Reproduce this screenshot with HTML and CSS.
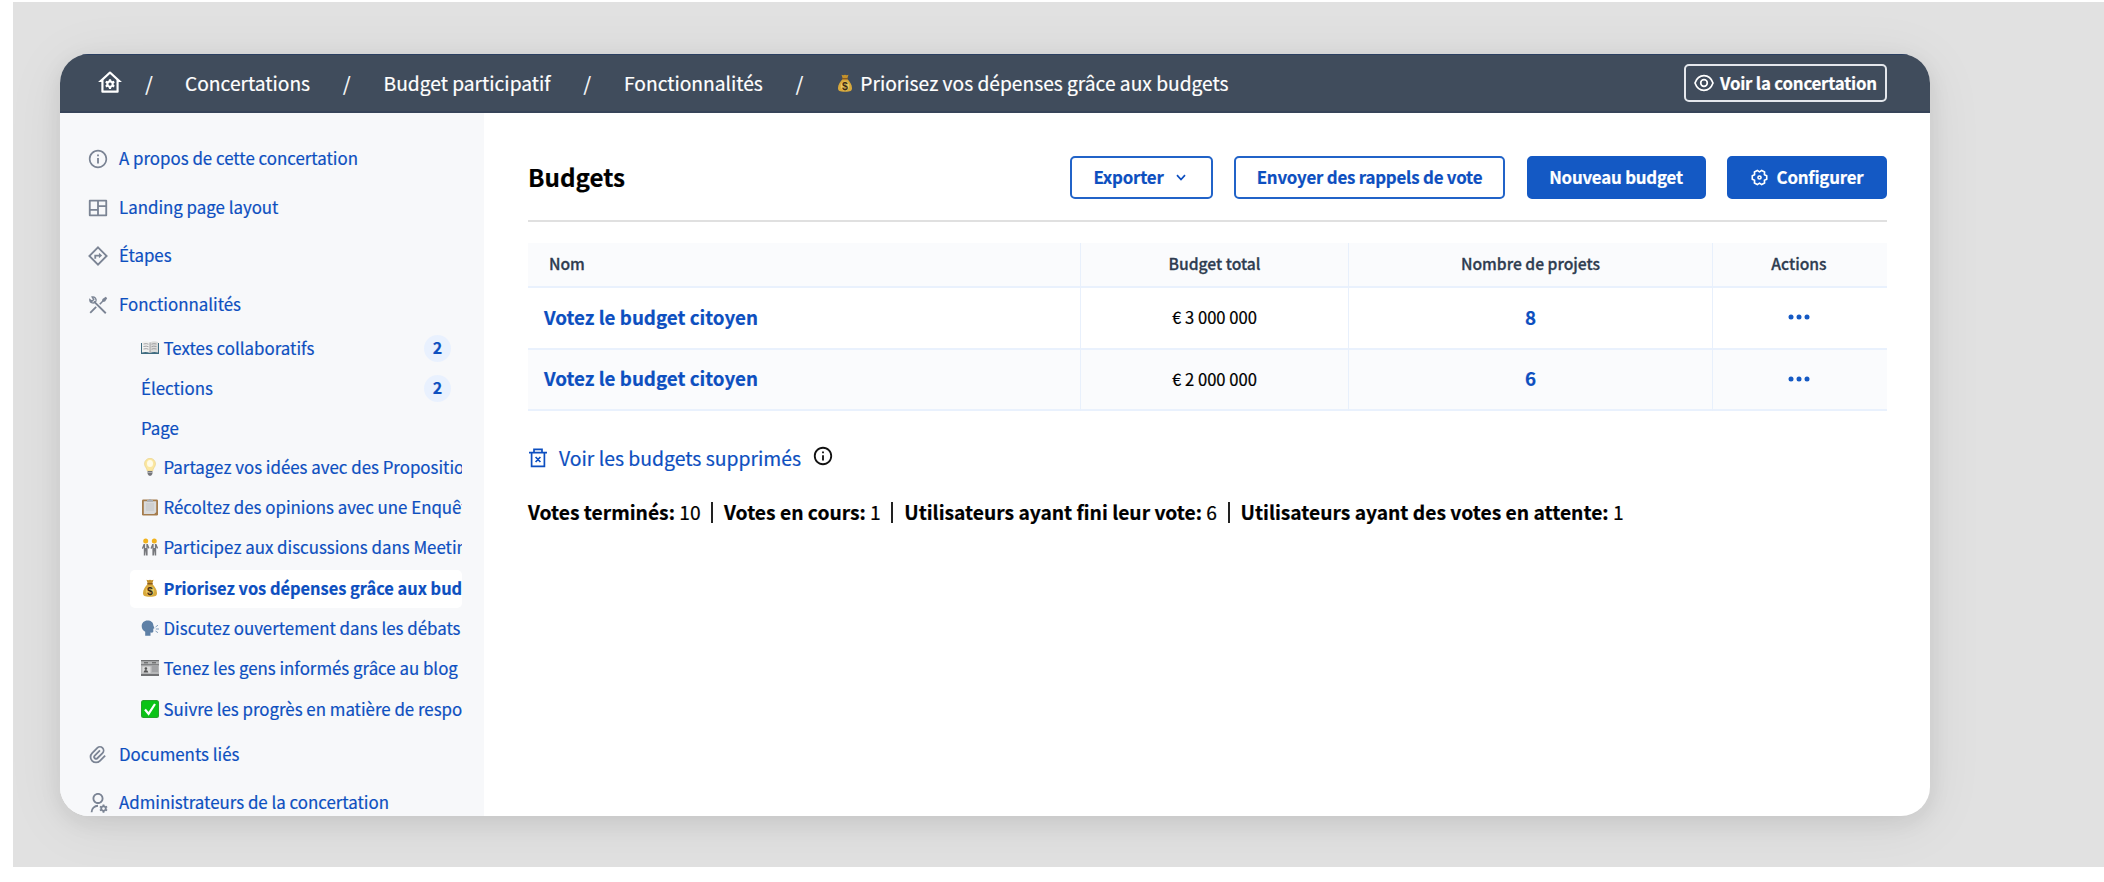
FILE: index.html
```html
<!DOCTYPE html>
<html lang="fr">
<head>
  <meta charset="UTF-8">
  <meta name="viewport" content="width=device-width, initial-scale=1.0">
  <title>Budgets</title>
  <link rel="stylesheet" href="styles.css">
</head>
<body>
  <div class="stage">
    <div class="window">
      <header class="topbar">
        <nav class="breadcrumb">
          <a class="home" href="#">
            <svg class="icon-home" viewBox="0 0 24 24" fill="currentColor"><path d="M19 21H5a1 1 0 0 1-1-1v-9H1l10.327-9.388a1 1 0 0 1 1.346 0L23 11h-3v9a1 1 0 0 1-1 1zM6 19h12V9.158l-6-5.455-6 5.455V19zm2.591-5.191a3.508 3.508 0 0 1 0-1.622l-.991-.572 1-1.732.991.573a3.495 3.495 0 0 1 1.404-.812V8.5h2v1.144c.532.159 1.01.44 1.404.812l.991-.573 1 1.731-.991.573a3.508 3.508 0 0 1 0 1.622l.991.572-1 1.731-.991-.572a3.495 3.495 0 0 1-1.404.811v1.145h-2V16.35a3.495 3.495 0 0 1-1.404-.811l-.991.572-1-1.73.991-.573zm3.404.688a1.5 1.5 0 1 0 0-2.998 1.5 1.5 0 0 0 0 2.998z"/></svg>
          </a>
          <span class="slash first">/</span>
          <a href="#">Concertations</a>
          <span class="slash">/</span>
          <a href="#">Budget participatif</a>
          <span class="slash">/</span>
          <a href="#">Fonctionnalités</a>
          <span class="slash">/</span>
          <a href="#"><svg class="emoji" viewBox="0 0 18 18"><use href="#bag"/></svg>Priorisez vos dépenses grâce aux budgets</a>
        </nav>
        <a class="view-button" href="#">
          <svg class="icon-eye" viewBox="0 0 20 18" fill="none" stroke="currentColor" stroke-width="1.700"><path d="M1 9C2.600 4.500 5.900 1.700 10 1.700S17.400 4.500 19 9c-1.600 4.500-4.900 7.300-9 7.300S2.600 13.500 1 9z"/><circle cx="10" cy="9" r="3.300"/></svg>
          Voir la concertation
        </a>
      </header>

      <div class="body">
        <aside class="sidebar">
          <a class="nav-item" href="#">
            <svg viewBox="0 0 24 24" fill="currentColor"><path d="M12 22C6.477 22 2 17.523 2 12S6.477 2 12 2s10 4.477 10 10-4.477 10-10 10zm0-1.800a8.200 8.200 0 1 0 0-16.400 8.200 8.200 0 0 0 0 16.400zM11 7h2v2h-2V7zm0 4h2v6h-2v-6z"/></svg>
            <span>A propos de cette concertation</span>
          </a>
          <a class="nav-item" href="#">
            <svg viewBox="0 0 24 24" fill="currentColor"><path d="M22 20a1 1 0 0 1-1 1H3a1 1 0 0 1-1-1V4a1 1 0 0 1 1-1h18a1 1 0 0 1 1 1v16zm-11-5H4v4h7v-4zm9-4h-7v8h7v-8zm-9-6H4v8h7V5zm9 0h-7v4h7V5z"/></svg>
            <span>Landing page layout</span>
          </a>
          <a class="nav-item" href="#">
            <svg viewBox="0 0 24 24" fill="none" stroke="currentColor" stroke-width="2"><path d="M12 2.600 21.400 12 12 21.400 2.600 12z"/><path d="M9 15v-3.500h5"/><path d="M13 8.500v6l3.500-3z" fill="currentColor" stroke="none"/></svg>
            <span>Étapes</span>
          </a>
          <a class="nav-item" href="#">
            <svg viewBox="0 0 24 24" fill="none" stroke="currentColor" stroke-width="2"><path d="m7.500 8 13 13M10 14l-6.500 6.500"/><path d="M5.600 3.300a3.500 3.500 0 0 1 4.200 4.400 3.500 3.500 0 0 1-6.700-1.600L5.400 8l2-2-1.800-2.700z" stroke-width="1.500"/><path d="m13.300 10.700 3-3 .6-2.200L20.500 3 22 4.500l-2.300 3.700-2.300.6-2.800 3z" fill="currentColor" stroke="none"/></svg>
            <span>Fonctionnalités</span>
          </a>

          <div class="subnav">
            <a class="sub-item" href="#">
              <svg class="emoji" viewBox="0 0 18 18"><path d="M0 4h18v11H0z" fill="#3f6c80"/><path d="M1 3q4.500-1.500 8 .5V14q-3.500-1.500-8-.5z" fill="#f1f1ef"/><path d="M17 3q-4.500-1.500-8 .5V14q3.500-1.500 8-.5z" fill="#dcdcda"/><path d="M9 3.500V14M2.500 5q3-.8 5 .2M2.500 7.500q3-.8 5 .2M2.500 10q3-.8 5 .2M15.500 5q-3-.8-5 .2M15.500 7.500q-3-.8-5 .2M15.500 10q-3-.8-5 .2" fill="none" stroke="#8d8d90" stroke-width=".8"/></svg>
              Textes collaboratifs<span class="badge">2</span>
            </a>
            <a class="sub-item" href="#">Élections<span class="badge">2</span></a>
            <a class="sub-item short" href="#">Page</a>
            <a class="sub-item" href="#">
              <svg class="emoji" viewBox="0 0 18 18"><path d="M9 .3a5.500 5.500 0 0 1 5.500 5.500c0 3-2.500 4.200-2.800 7.200H6.300C6 10 3.500 8.800 3.500 5.800A5.500 5.500 0 0 1 9 .3z" fill="#fbe7a0" stroke="#e9cf80" stroke-width=".6"/><ellipse cx="9" cy="5.500" rx="3" ry="3.500" fill="#fffbe6"/><path d="M6.600 13h4.800v3L10 17.700H8L6.600 16z" fill="#74757a"/><path d="M6.600 14.500h4.800" stroke="#b9babd" stroke-width=".8"/></svg>
              Partagez vos idées avec des Propositions
            </a>
            <a class="sub-item" href="#">
              <svg class="emoji" viewBox="0 0 18 18"><rect x="1" y="1.500" width="16" height="16" rx="1.200" fill="#a57c4c"/><path d="M2.800 3.300h12.400v11l-2 1.700H2.800z" fill="#d9dadb"/><path d="M5 6h8M5 8h8M5 10h8M5 12h8" stroke="#bfc0c2" stroke-width=".8"/><path d="M6 3.800V2h1.600a1.500 1.500 0 0 1 2.800 0H12v1.800z" fill="#a9adb2"/></svg>
              Récoltez des opinions avec une Enquête
            </a>
            <a class="sub-item" href="#">
              <svg class="emoji" viewBox="0 0 18 18"><g id="person"><circle cx="4.700" cy="2.900" r="2.500" fill="#f2b21c"/><path d="M2.600 6h4.200l1.700 4-1 .8-.9-1.500V17.500H5.100l-.4-5-.4 5H2.800V9.300L1.900 11l-1-.7z" fill="#77787c"/><path d="M4 6h1.400v4H4z" fill="#e8e8e8"/></g><use href="#person" x="8.600"/></svg>
              Participez aux discussions dans Meetings
            </a>
            <a class="sub-item active" href="#">
              <svg class="emoji" viewBox="0 0 18 18"><g id="bag"><path d="M5.500.8q1.700.8 3.500 0 1.800.8 3.500 0L11.300 4.500H6.700z" fill="#c4912b"/><path d="M6.700 5h4.600c2.500 2.500 4.700 5.500 4.700 9 0 2.800-1.500 3.800-7 3.800S2 16.800 2 14c0-3.500 2.200-6.500 4.700-9z" fill="#d8a93c"/><path d="M6.300 4.700h5.400" stroke="#8a5a1e" stroke-width="1.400"/><ellipse cx="9" cy="12" rx="4.300" ry="4.500" fill="#e9c65f"/><text x="9" y="15.800" class="dollar">$</text></g></svg>
              Priorisez vos dépenses grâce aux budgets
            </a>
            <a class="sub-item" href="#">
              <svg class="emoji" viewBox="0 0 18 18"><path d="M6.500 1.500c3.600 0 5.800 2 5.900 5l1.100 2.700-1.200.6v2.700c0 .9-.7 1.400-2.800 1.100V16.700H4.200v-3.900C2 11.500.7 9.600.7 7.200c0-3.400 2.500-5.700 5.800-5.700z" fill="#5e80a6"/><path d="m14.500 8 2.500-1.800M14.800 10H18M14.500 12l2.500 1.700" stroke="#86a0bd" stroke-width="1"/></svg>
              Discutez ouvertement dans les débats
            </a>
            <a class="sub-item" href="#">
              <svg class="emoji" viewBox="0 0 18 18"><path d="M0 1h18v16H0z" fill="#b6b7b8"/><path d="M0 1h18v1.300H0zM0 5.300h18v.9H0z" fill="#6f7072"/><path d="M3 3.800h4M11 3.800h4" stroke="#555" stroke-width="1"/><path d="M1.500 7.500h8v6.500h-8z" fill="#d9d9d9"/><path d="M2.500 13.500q0-2.500 2.300-2.500t2.500 2.500z" fill="#555"/><circle cx="4.900" cy="9.600" r="1.300" fill="#555"/><path d="M11 8h6M11 10h6M11 12h6" stroke="#86878a" stroke-width=".8"/><path d="M0 15h18v2H0z" fill="#717274"/></svg>
              Tenez les gens informés grâce au blog
            </a>
            <a class="sub-item" href="#">
              <svg class="emoji" viewBox="0 0 18 18"><rect width="18" height="18" rx="2.500" fill="#27a32b"/><rect x="1" y="1" width="16" height="16" rx="1.800" fill="#0bc316"/><path d="m4 9.500 3.600 4.300L14 4" fill="none" stroke="#fff" stroke-width="2.200"/></svg>
              Suivre les progrès en matière de responsabilité
            </a>
          </div>

          <a class="nav-item" href="#">
            <svg viewBox="0 0 24 24" fill="currentColor"><path d="m14.828 7.757-5.656 5.657a1 1 0 1 0 1.414 1.414l5.657-5.656A3 3 0 1 0 12 4.929l-5.657 5.657a5 5 0 1 0 7.071 7.070L19.071 12l1.414 1.414-5.657 5.657a7 7 0 1 1-9.900-9.900l5.658-5.656a5 5 0 0 1 7.070 7.070L12 16.244A3 3 0 1 1 7.757 12l5.657-5.657 1.414 1.414z"/></svg>
            <span>Documents liés</span>
          </a>
          <a class="nav-item" href="#">
            <svg viewBox="0 0 24 24" fill="currentColor"><path d="M12 14v2a6 6 0 0 0-6 6H4a8 8 0 0 1 8-8zm0-1c-3.315 0-6-2.685-6-6s2.685-6 6-6 6 2.685 6 6-2.685 6-6 6zm0-2c2.210 0 4-1.790 4-4s-1.790-4-4-4-4 1.790-4 4 1.790 4 4 4zm2.595 7.812a3.510 3.510 0 0 1 0-1.623l-.992-.573 1-1.732.992.573A3.496 3.496 0 0 1 17 14.645V13.500h2v1.145c.532.158 1.012.440 1.405.812l.992-.573 1 1.732-.992.573a3.510 3.510 0 0 1 0 1.622l.992.573-1 1.732-.992-.573a3.496 3.496 0 0 1-1.405.812V22.500h-2v-1.145a3.496 3.496 0 0 1-1.405-.812l-.992.573-1-1.732.992-.572zM18 19.500a1.500 1.500 0 1 0 0-3 1.500 1.500 0 0 0 0 3z"/></svg>
            <span>Administrateurs de la concertation</span>
          </a>
        </aside>

        <main class="content">
          <div class="page-head">
            <h1>Budgets</h1>
            <div class="actions">
              <button class="btn export">Exporter
                <svg class="icon-chevron" viewBox="0 0 10 10" fill="none" stroke="currentColor" stroke-width="1.700"><path d="m1 3.200 4 4.300 4-4.300"/></svg>
              </button>
              <button class="btn reminders">Envoyer des rappels de vote</button>
              <button class="btn primary new">Nouveau budget</button>
              <button class="btn primary configure">
                <svg class="icon-gear" viewBox="0 0 24 24" fill="none" stroke="currentColor" stroke-width="2.300" stroke-linejoin="round"><path d="M22.200 9.600v4.800L18.900 16l.3 3.700-4.100 2.300-3.100-2-3.100 2-4.100-2.300.3-3.700-3.300-1.600V9.600L5.100 8l-.3-3.700L8.900 2 12 4l3.100-2 4.100 2.300-.3 3.700z"/><circle cx="12" cy="12" r="2.200"/></svg>
                Configurer
              </button>
            </div>
          </div>

          <table class="budgets">
            <thead>
              <tr>
                <th class="col-name">Nom</th>
                <th class="col-total">Budget total</th>
                <th class="col-projects">Nombre de projets</th>
                <th>Actions</th>
              </tr>
            </thead>
            <tbody>
              <tr>
                <td><a href="#">Votez le budget citoyen</a></td>
                <td>€ 3 000 000</td>
                <td><a href="#">8</a></td>
                <td><svg class="icon-dots" viewBox="0 0 22 6" fill="currentColor"><circle cx="3" cy="3" r="2.500"/><circle cx="11" cy="3" r="2.500"/><circle cx="19" cy="3" r="2.500"/></svg></td>
              </tr>
              <tr>
                <td><a href="#">Votez le budget citoyen</a></td>
                <td>€ 2 000 000</td>
                <td><a href="#">6</a></td>
                <td><svg class="icon-dots" viewBox="0 0 22 6" fill="currentColor"><circle cx="3" cy="3" r="2.500"/><circle cx="11" cy="3" r="2.500"/><circle cx="19" cy="3" r="2.500"/></svg></td>
              </tr>
            </tbody>
          </table>

          <div class="deleted">
            <a href="#">
              <svg class="icon-trash" viewBox="0 0 18 20" fill="none" stroke="currentColor" stroke-width="1.700"><path d="M0 4.700h18M2.600 4.700v13.600h12.800V4.700M5 4.700V1.300h8v3.400M6.600 9l4.800 5M11.400 9l-4.800 5"/></svg>
              Voir les budgets supprimés
            </a>
            <svg class="icon-info" viewBox="0 0 24 24" fill="currentColor"><path d="M12 23C5.900 23 1 18.100 1 12S5.900 1 12 1s11 4.900 11 11-4.900 11-11 11zm0-2.200a8.800 8.800 0 1 0 0-17.600 8.800 8.800 0 0 0 0 17.600zM10.900 6.500h2.200v2.300h-2.200V6.500zm0 4.500h2.200v6.500h-2.200V11z"/></svg>
          </div>

          <div class="votes">
            <span><b>Votes terminés:</b> 10</span>
            <span><b>Votes en cours:</b> 1</span>
            <span><b>Utilisateurs ayant fini leur vote:</b> 6</span>
            <span><b>Utilisateurs ayant des votes en attente:</b> 1</span>
          </div>
        </main>
      </div>
    </div>
  </div>
</body>
</html>
```
FILE: styles.css
```css
* {
  box-sizing: border-box;
}

body {
  margin: 0;
  height: 882px;
  padding: 2px 0 0 13px;
  background: #fff;
  font-family: "Noto Sans CJK JP", "Noto Sans", sans-serif;
  font-size: 16.86px;
  line-height: 24px;
  overflow: hidden;
  -webkit-text-stroke: 0.2px;
}

a {
  color: #0d4fc0;
  text-decoration: none;
}

svg {
  display: block;
  flex: none;
}

.stage {
  height: 865px;
  padding: 52px 0 0 47px;
  background: #e1e1e1;
  overflow: hidden;
}

.window {
  display: flex;
  flex-direction: column;
  width: 1870px;
  height: 762px;
  border-radius: 29px;
  background: #fff;
  overflow: hidden;
  box-shadow: 0 8px 60px rgba(0, 0, 0, 0.07), 0 6px 22px rgba(0, 0, 0, 0.08);
}

/* top bar */
.topbar {
  display: flex;
  align-items: center;
  justify-content: space-between;
  height: 59px;
  padding: 0 43px 0 37px;
  background: #404c5c;
  border-top: 1px solid #2b3f61;
  border-bottom: 2px solid #374459;
  flex: none;
}

.breadcrumb {
  display: flex;
  align-items: center;
  font-size: 19.2px;
  color: #fff;
}

.breadcrumb a {
  display: flex;
  align-items: center;
  color: #fff;
}

.icon-home {
  width: 26px;
  height: 26px;
}

.slash {
  width: 73.500px;
  text-align: center;
}

.slash.first {
  width: 62px;
  padding-right: 10px;
}

.breadcrumb .emoji {
  margin-right: 6px;
}

.view-button {
  display: flex;
  align-items: center;
  gap: 6px;
  width: 203px;
  height: 38px;
  padding: 0 8px;
  border: 2px solid #e4e7ec;
  border-radius: 5px;
  color: #fff;
  font-weight: 700;
  letter-spacing: -0.22px;
  white-space: nowrap;
}

.icon-eye {
  width: 20px;
  height: 18px;
}

.body {
  display: flex;
  flex: 1;
  min-height: 0;
}

/* sidebar */
.sidebar {
  display: flex;
  flex-direction: column;
  width: 424px;
  padding: 22px 22px 0 27px;
  background: #f7f8fa;
  overflow: hidden;
  flex: none;
}

.nav-item {
  display: flex;
  align-items: center;
  gap: 10px;
  height: 48.5px;
  flex: none;
}

.nav-item span {
  padding-bottom: 2px;
}

.nav-item svg {
  width: 22px;
  height: 22px;
  color: #7b8494;
}

.subnav {
  display: flex;
  flex-direction: column;
  gap: 2.3px;
  margin-left: 43px;
  padding: 1px 0 2px;
}

.sub-item {
  display: flex;
  align-items: center;
  height: 38px;
  padding: 0 0 2px 11px;
  border-radius: 5px;
  white-space: nowrap;
  overflow: hidden;
}

.sub-item.short {
  height: 36px;
}

.sub-item.active {
  background: #fff;
  font-weight: 700;
  font-size: 16.4px;
}

.emoji {
  width: 18px;
  height: 18px;
  margin-right: 4.5px;
  -webkit-text-stroke: 0;
}

.dollar {
  font-family: "Liberation Sans", sans-serif;
  font-size: 10.5px;
  font-weight: 700;
  text-anchor: middle;
  fill: #3d2b12;
}

.badge {
  width: 27px;
  height: 27px;
  margin: 0 11px 0 auto;
  border-radius: 50%;
  background: #e9f1fe;
  font-weight: 700;
  font-size: 16px;
  line-height: 25px;
  text-align: center;
}

/* main column */
.content {
  flex: 1;
  padding: 43px 43px 0 44px;
}

.page-head {
  display: flex;
  justify-content: space-between;
  height: 66px;
  border-bottom: 2px solid #e0e0e0;
}

h1 {
  margin: 0;
  font-size: 24.2px;
  line-height: 42px;
  color: #000;
}

.actions {
  display: flex;
  gap: 21.500px;
}

.btn {
  display: flex;
  align-items: center;
  justify-content: center;
  height: 43px;
  padding: 0 0 2px;
  border: 2px solid #2163c8;
  border-radius: 5px;
  background: #fff;
  color: #0d4fc0;
  font-family: inherit;
  font-weight: 700;
  font-size: 16.86px;
  letter-spacing: -0.2px;
  white-space: nowrap;
}

.btn.primary {
  background: #1459c4;
  border-color: #1459c4;
  color: #fff;
}

.export {
  width: 143px;
  padding-right: 3px;
  gap: 12px;
}

.reminders {
  width: 271px;
}

.new {
  width: 179px;
}

.configure {
  width: 160px;
  gap: 9px;
}

.icon-chevron {
  width: 10px;
  height: 10px;
}

.icon-gear {
  width: 17px;
  height: 17px;
  margin-top: 2px;
}

/* budget list */
.budgets {
  width: 100%;
  margin-top: 21px;
  table-layout: fixed;
  border-collapse: separate;
  border-spacing: 0;
  text-align: center;
}

.budgets th,
.budgets td {
  padding: 0 0 1px;
  border-right: 1px solid #e8f0fc;
  border-bottom: 2px solid #e9f1fd;
}

.budgets th:last-child,
.budgets td:last-child {
  padding-right: 2px;
  border-right: 0;
}

.budgets th {
  height: 45px;
  background: #fafbfd;
  color: #2e3c50;
  font-weight: 500;
  font-size: 15.66px;
  -webkit-text-stroke: 0.3px;
}

.budgets td {
  height: 61.500px;
  font-size: 16.6px;
}

.budgets tr:nth-child(2) td {
  background: #fafbfd;
}

.budgets th:first-child {
  padding-left: 21px;
  text-align: left;
}

.budgets td:first-child {
  padding-left: 16px;
  text-align: left;
}

.budgets td a {
  font-weight: 700;
  font-size: 18.8px;
}

.col-name {
  width: 553px;
}

.col-total {
  width: 268px;
}

.col-projects {
  width: 364px;
}

.icon-dots {
  width: 22px;
  height: 6px;
  margin: 0 auto;
  color: #1459c4;
}

.deleted {
  display: flex;
  align-items: center;
  gap: 12px;
  margin-top: 33px;
  font-size: 19.36px;
  line-height: 28px;
}

.deleted a {
  display: flex;
  align-items: center;
  gap: 12px;
  padding-left: 1px;
}

.icon-trash {
  width: 18px;
  height: 20px;
}

.icon-info {
  width: 20px;
  height: 20px;
  margin-bottom: 5px;
  color: #111;
}

.votes {
  display: flex;
  align-items: center;
  margin-top: 30px;
  font-size: 19.25px;
  line-height: 21px;
  color: #000;
}

.votes span + span {
  margin-left: 10.500px;
  padding-left: 11px;
  border-left: 2px solid #222;
}
```
